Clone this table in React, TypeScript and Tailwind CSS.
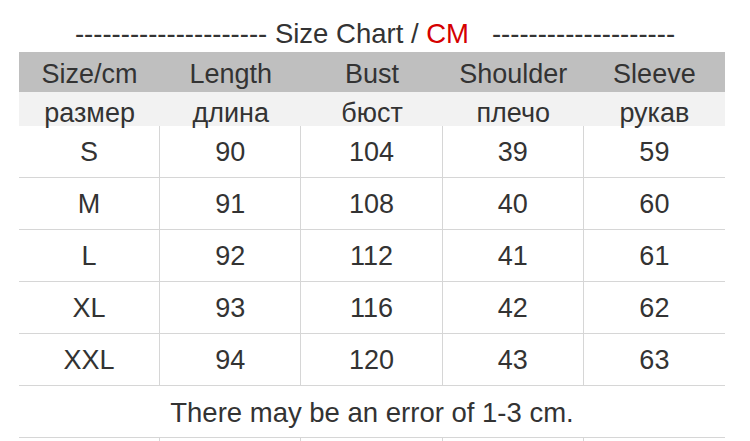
import React from 'react';

const columns = ['Size/cm', 'Length', 'Bust', 'Shoulder', 'Sleeve'];
const columnsRu = ['размер', 'длина', 'бюст', 'плечо', 'рукав'];

const rows: (string | number)[][] = [
    ['S', 90, 104, 39, 59],
    ['M', 91, 108, 40, 60],
    ['L', 92, 112, 41, 61],
    ['XL', 93, 116, 42, 62],
    ['XXL', 94, 120, 43, 63],
];

const font = { fontFamily: '"Liberation Sans", Arial, sans-serif' };

const DataRow: React.FC<{ cells: (string | number)[] }> = ({ cells }) => (
    <div className="grid grid-cols-5 h-[52px] border-b border-[#d6d6d6]">
        {cells.map((c, i) => (
            <div
                key={i}
                className={`flex items-center justify-center pt-[2px] text-[27px] text-[#333] ${
                    i < 4 ? 'border-r border-[#d6d6d6]' : ''
                }`}
            >
                {c}
            </div>
        ))}
    </div>
);

export default function App() {
    return (
        <div className="w-[750px] h-[441px] bg-white overflow-hidden" style={font}>
            <div className="pt-[15px] h-[52px] text-center text-[27.5px] leading-[38px] text-[#333] whitespace-pre">
                --------------------- Size Chart / <span className="text-[#d50000]">CM</span>
                {'   '}--------------------
            </div>

            <div className="ml-[19px] w-[706px]">
                <div className="grid grid-cols-5 h-[40px] bg-[#bfbfbf]">
                    {columns.map((c) => (
                        <div key={c} className="flex items-center justify-center pt-[2px] text-[27px] text-[#333]">
                            {c}
                        </div>
                    ))}
                </div>
                <div className="grid grid-cols-5 h-[34px] bg-[#f2f2f2]">
                    {columnsRu.map((c) => (
                        <div key={c} className="flex items-center justify-center pt-[1px] text-[27px] text-[#333]">
                            {c}
                        </div>
                    ))}
                </div>

                {rows.map((r) => (
                    <DataRow key={r[0]} cells={r} />
                ))}

                <div className="h-[52px] flex items-center justify-center pt-[2px] border-b border-[#d6d6d6] text-[27.5px] text-[#333]">
                    There may be an error of 1-3 cm.
                </div>

                <DataRow cells={['', '', '', '', '']} />
            </div>
        </div>
    );
}
